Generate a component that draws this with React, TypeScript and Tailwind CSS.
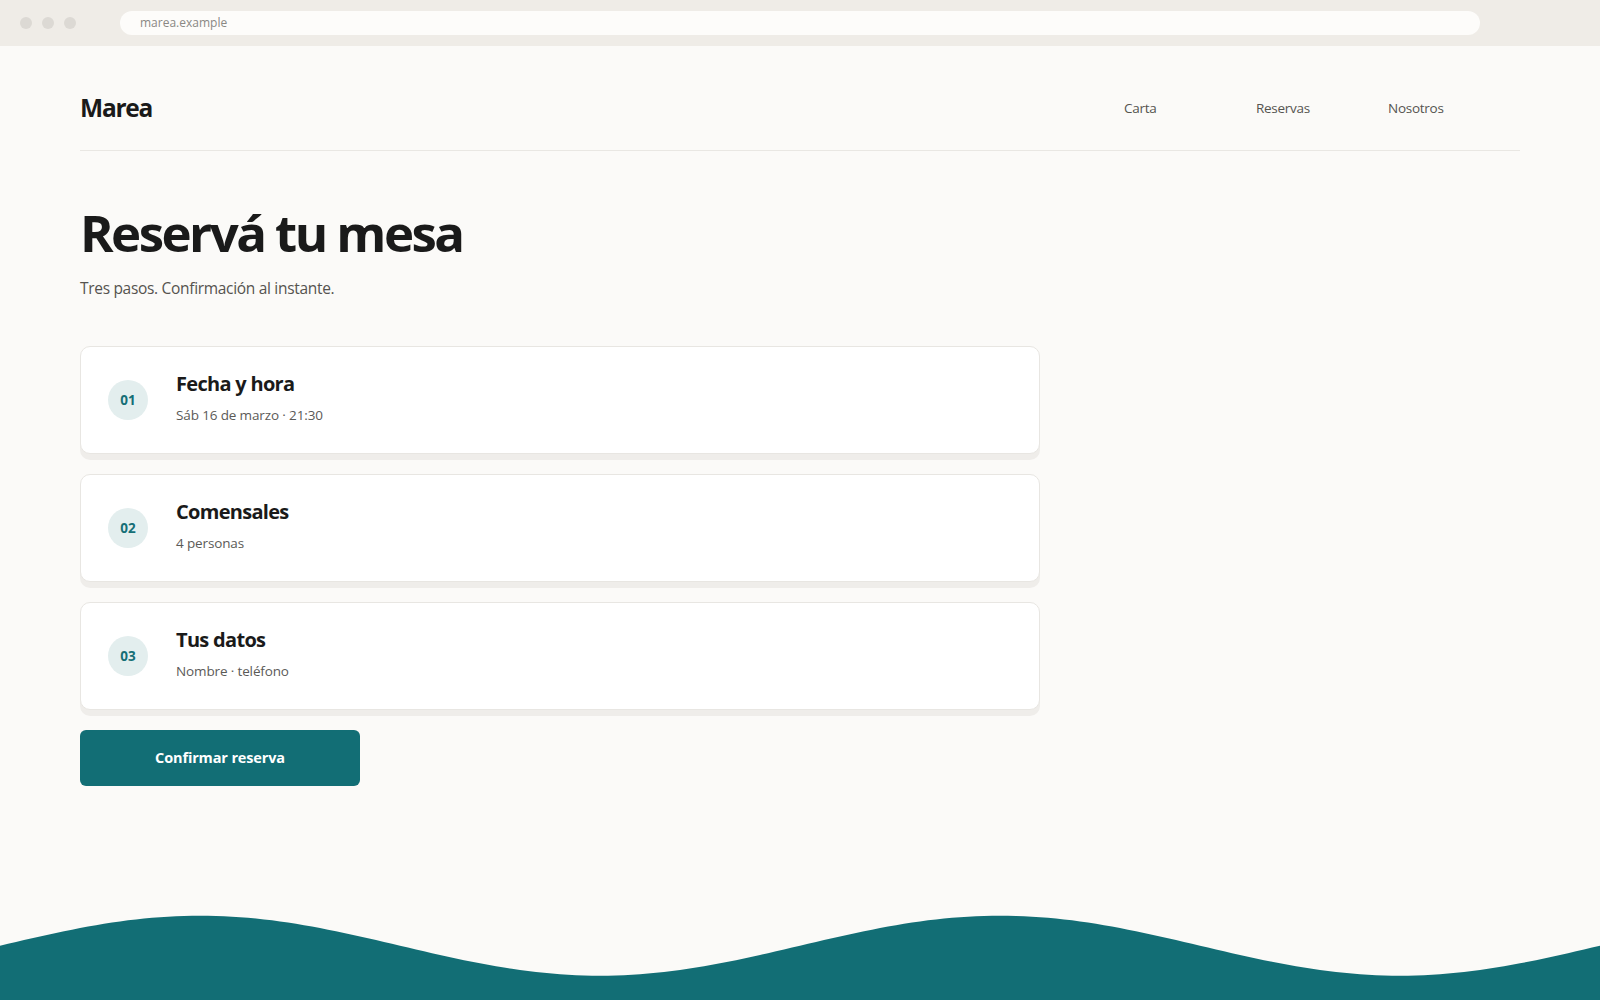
import React from "react";

const steps = [
  { n: "01", title: "Fecha y hora", detail: "Sáb 16 de marzo · 21:30" },
  { n: "02", title: "Comensales", detail: "4 personas" },
  { n: "03", title: "Tus datos", detail: "Nombre · teléfono" },
];

// wave along the bottom edge
const wavePoints: string[] = [];
for (let x = 0; x <= 1600; x += 8) {
  const y = 45.7 - 30 * Math.sin((2 * Math.PI * x) / 800);
  wavePoints.push(`${x},${y.toFixed(2)}`);
}
const wavePath = `M0,100 L${wavePoints.join(" L")} L1600,100 Z`;

function BrowserBar() {
  return (
    <div className="flex h-[46px] shrink-0 items-center bg-[#efece7] px-5">
      <div className="flex gap-[10px]">
        <span className="size-3 rounded-full bg-[#dcd9d4]" />
        <span className="size-3 rounded-full bg-[#dcd9d4]" />
        <span className="size-3 rounded-full bg-[#dcd9d4]" />
      </div>
      <div className="ml-[44px] flex h-6 w-[1360px] items-center rounded-full bg-[#fdfcfa] px-5 text-[12px] text-[#8a8884]">
        marea.example
      </div>
    </div>
  );
}

function StepCard({ n, title, detail }: { n: string; title: string; detail: string }) {
  return (
    <div className="flex h-[108px] w-[960px] items-center gap-7 rounded-[10px] border border-[#e8e6e2] bg-white pl-[27px] shadow-[0_6px_0_#efedea]">
      <div className="flex size-10 shrink-0 items-center justify-center rounded-full bg-[#e3eeee] text-[13.5px] font-bold text-[#166f76]">
        {n}
      </div>
      <div className="mb-[5px] flex flex-col">
        <p className="text-[20px] leading-7 font-bold tracking-[-0.035em] text-[#1a1a1a]">{title}</p>
        <p className="mt-[7px] text-[13.5px] leading-5 tracking-[-0.01em] text-[#5b5a57]">{detail}</p>
      </div>
    </div>
  );
}

export default function App() {
  return (
    <div className="flex h-screen flex-col overflow-hidden bg-[#fbfaf8] font-['Open_Sans','Noto_Sans',sans-serif]">
      <BrowserBar />
      <div className="flex flex-1 flex-col">
        <div className="px-20">
          <header className="flex items-center justify-between border-b border-[#e9e7e3] pt-[44px] pb-[24px]">
            <span className="text-[24.5px] leading-9 font-bold tracking-[-0.05em] text-[#1a1a1a]">Marea</span>
            <nav className="grid w-[396px] grid-cols-3 text-[13.5px] leading-5 tracking-[-0.02em] text-[#555450]">
              <a>Carta</a>
              <a>Reservas</a>
              <a>Nosotros</a>
            </nav>
          </header>

          <main>
            <h1 className="mt-14 text-[51px] leading-none font-bold tracking-[-0.05em] text-[#1a1a1a]">
              Reservá tu mesa
            </h1>
            <p className="mt-[18px] text-[15.5px] leading-6 tracking-[-0.02em] text-[#55534f]">
              Tres pasos. Confirmación al instante.
            </p>

            <div className="mt-[46px] flex flex-col gap-5">
              {steps.map((s) => (
                <StepCard key={s.n} {...s} />
              ))}
            </div>

            <button className="mt-5 flex h-14 w-[280px] items-center justify-center rounded-md bg-[#126e75] text-[14.5px] font-bold tracking-[-0.01em] text-white">
              Confirmar reserva
            </button>
          </main>
        </div>

        <svg className="mt-auto block h-[100px] w-full" viewBox="0 0 1600 100" preserveAspectRatio="none">
          <path d={wavePath} fill="#126e75" />
        </svg>
      </div>
    </div>
  );
}
